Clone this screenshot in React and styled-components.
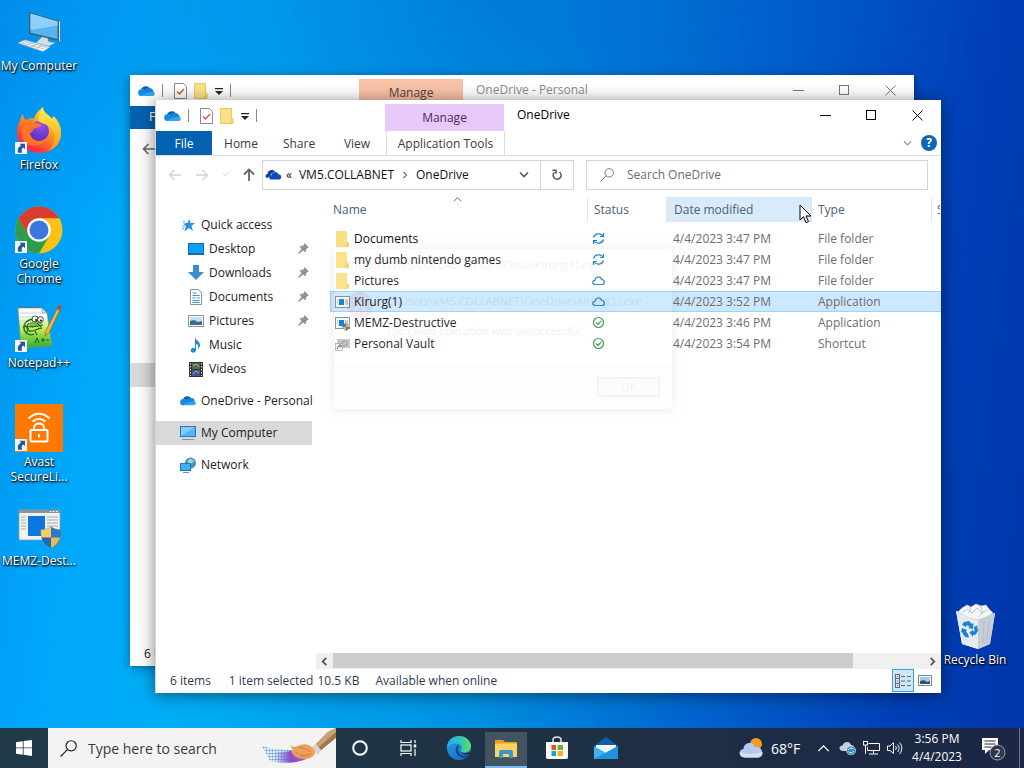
import React, { useState } from 'react';
import styled, { createGlobalStyle } from 'styled-components';

const GlobalStyle = createGlobalStyle`
  html, body, #root {
    height: 100%;
  }
  body {
    margin: 0;
    overflow: hidden;
    font-family: 'Open Sans', 'Noto Sans', sans-serif;
    font-size: 12px;
    color: #222;
  }
  * {
    box-sizing: border-box;
  }
  button, input {
    font: inherit;
    color: inherit;
    border: none;
    background: none;
    padding: 0;
    margin: 0;
  }
  a {
    color: inherit;
    text-decoration: none;
  }
  svg {
    display: block;
    flex: none;
  }
`;

const Screen = styled.div`
  height: 100%;
  min-height: 700px;
  display: flex;
  flex-direction: column;
`;

const Desktop = styled.main`
  flex: 1;
  position: relative;
  background:
    radial-gradient(ellipse 60% 40% at 50% 0%, rgba(0, 70, 190, 0.35), transparent),
    linear-gradient(97deg, #0093ee 0%, #00a8fa 12%, #00aef6 24%, #0092e2 50%, #0060cc 72%, #0040b8 88%, #0036a8 100%);
`;

const IconColumn = styled.div`
  display: flex;
  flex-direction: column;
  width: 78px;
`;

const Shortcut = styled.button`
  width: 78px;
  height: 99px;
  padding-top: 8px;
  display: flex;
  flex-direction: column;
  align-items: center;
  gap: 2px;
  color: #fff;
  line-height: 15px;
  text-shadow: 1px 1px 2px #000, 0 1px 2px rgba(0, 0, 0, 0.8);
`;

const BinSpot = styled.div`
  position: absolute;
  right: 10px;
  bottom: 35px;
`;

/* ---- windows ---- */

const BackWindow = styled.section`
  position: absolute;
  left: 130px;
  right: 110px;
  top: 75px;
  bottom: 62px;
  background: #fff;
  box-shadow: 0 2px 10px rgba(0, 0, 0, 0.4);
  display: flex;
  flex-direction: column;
`;

const FrontWindow = styled.section`
  position: absolute;
  left: 155px;
  right: 83px;
  top: 100px;
  bottom: 35px;
  background: #fff;
  border-left: 1px solid #d5d5d5;
  box-shadow: 0 2px 16px rgba(0, 0, 0, 0.5);
  display: flex;
  flex-direction: column;
`;

const TitleBar = styled.header`
  display: flex;
  height: 31px;
  flex: none;
  padding-right: 1px;
  color: ${(p) => (p.$dim ? '#8c8c8c' : '#000')};
`;

const QuickTools = styled.div`
  width: 229px;
  flex: none;
  padding-left: 8px;
  display: flex;
  align-items: center;
  gap: 7px;
`;

const Divider = styled.span`
  width: 1px;
  height: 13px;
  margin-right: 4px;
  background: #888;
`;

const ManageTab = styled.div`
  width: ${(p) => p.$width}px;
  flex: none;
  margin-top: 4px;
  display: flex;
  align-items: center;
  justify-content: center;
  background: ${(p) => p.$color};
  color: ${(p) => p.$text};
`;

const WindowTitle = styled.h1`
  flex: 1;
  margin: 0;
  padding-left: 13px;
  font-size: 12px;
  font-weight: 400;
  line-height: 30px;
`;

const WindowButton = styled.button`
  width: 46px;
  height: 30px;
  display: flex;
  align-items: center;
  justify-content: center;
`;

const Ribbon = styled.nav`
  display: flex;
  align-items: center;
  height: 25px;
  flex: none;
  border-bottom: 1px solid #dedede;
  color: #3b3b3b;
`;

const FileTab = styled.button`
  width: 56px;
  height: 24px;
  background: #0463b1;
  color: #fff;
`;

const RibbonTab = styled.button`
  width: 58px;
  height: 24px;
`;

const ToolsTab = styled.button`
  width: 119px;
  height: 24px;
  border-left: 1px solid #ddd;
  border-right: 1px solid #ddd;
`;

const RibbonEnd = styled.div`
  margin-left: auto;
  padding-right: 4px;
  display: flex;
  align-items: center;
  gap: 9px;
`;

const Help = styled.button`
  width: 16px;
  height: 16px;
  border-radius: 50%;
  background: #0b67b5;
  color: #fff;
  font-weight: 700;
  line-height: 16px;
`;

const NavRow = styled.div`
  display: flex;
  align-items: center;
  height: 39px;
  flex: none;
  padding: 0 13px 2px 0;
`;

const Arrows = styled.div`
  width: 106px;
  flex: none;
  display: flex;
  align-items: center;
  padding-left: 12px;
  gap: 13px;
`;

const AddressBox = styled.div`
  flex: 1 1 312px;
  height: 30px;
  display: flex;
  align-items: center;
  border: 1px solid #d4d4d4;
  color: #111;
`;

const Crumb = styled.a`
  padding: 0 7px;
`;

const RootCrumb = styled.a`
  padding: 0 4px 0 2px;
`;

const DropButton = styled.button`
  margin-left: auto;
  width: 32px;
  display: flex;
  justify-content: center;
`;

const RefreshButton = styled.button`
  width: 33px;
  height: 28px;
  border-left: 1px solid #d4d4d4;
  display: flex;
  align-items: center;
  justify-content: center;
`;

const SearchBox = styled.label`
  flex: 1 1 342px;
  height: 30px;
  margin-left: 12px;
  padding-left: 13px;
  display: flex;
  align-items: center;
  gap: 13px;
  border: 1px solid #d4d4d4;
`;

const TextInput = styled.input`
  flex: 1;
  min-width: 0;
  outline: none;
  &::placeholder {
    color: ${(p) => p.$hint};
    opacity: 1;
  }
`;

const Content = styled.div`
  flex: 1;
  min-height: 0;
  display: flex;
`;

const Sidebar = styled.nav`
  width: 160px;
  flex: none;
  padding: 18px 4px 0 0;
`;

const SideLink = styled.a`
  display: flex;
  align-items: center;
  gap: 5px;
  height: 24px;
  margin-bottom: ${(p) => (p.$gap ? 8 : 0)}px;
  padding-left: ${(p) => (p.$top ? 24 : 32)}px;
  padding-bottom: 1px;
  background: ${(p) => (p.$active ? '#d9d9d9' : 'none')};
  white-space: nowrap;
`;

const PinSlot = styled.span`
  margin-left: auto;
  margin-right: 3px;
`;

const FilePane = styled.div`
  flex: 1;
  min-width: 0;
  position: relative;
  display: flex;
  flex-direction: column;
`;

const TableWrap = styled.div`
  flex: 1;
  padding: 2px 0 0 14px;
  overflow: hidden;
`;

const Table = styled.table`
  width: 100%;
  table-layout: fixed;
  border-collapse: separate;
  border-spacing: 0;
`;

const HeadCell = styled.th`
  height: 25px;
  padding: 0 0 0 ${(p) => p.$pad}px;
  text-align: left;
  font-weight: 400;
  color: #4c607a;
  white-space: nowrap;
  overflow: hidden;
  border-right: 1px solid ${(p) => (p.$last ? 'transparent' : '#e5e5e5')};
  background: ${(p) => (p.$hot ? '#d9ebf9' : 'none')};
`;

const SortMark = styled.span`
  position: absolute;
  top: 0;
  left: 137px;
`;

const Spacer = styled.td`
  height: 6px;
  padding: 0;
`;

const Row = styled.tr`
  & > td {
    height: 21px;
    padding: 0 0 0 6px;
    white-space: nowrap;
    overflow: hidden;
    line-height: 19px;
    color: #6d6d6d;
    border-top: 1px solid ${(p) => (p.$on ? '#99d1ff' : 'transparent')};
    border-bottom: 1px solid ${(p) => (p.$on ? '#99d1ff' : 'transparent')};
    background: ${(p) => (p.$on ? '#cce8ff' : 'none')};
  }
  & > td:first-child {
    padding-left: 4px;
    color: #111;
    border-left: 1px solid ${(p) => (p.$on ? '#99d1ff' : 'transparent')};
  }
  & > td:nth-child(2) {
    padding-left: 4px;
  }
`;

const FileName = styled.span`
  display: flex;
  align-items: center;
  gap: 4px;
`;

const ScrollBar = styled.div`
  display: flex;
  height: 16px;
  flex: none;
  background: #f0f0f0;
`;

const ScrollButton = styled.button`
  width: 17px;
  display: flex;
  align-items: center;
  justify-content: center;
`;

const ScrollTrack = styled.div`
  flex: 1;
`;

const ScrollThumb = styled.div`
  width: 88%;
  height: 15px;
  background: #cdcdcd;
`;

const StatusBar = styled.footer`
  display: flex;
  align-items: center;
  height: 24px;
  flex: none;
  padding: 0 5px 1px 14px;
  color: #2b3a52;
`;

const StatusText = styled.span`
  margin-right: ${(p) => p.$gap}px;
`;

const ViewButtons = styled.div`
  margin-left: auto;
  display: flex;
`;

const ViewButton = styled.button`
  width: 22px;
  height: 23px;
  display: flex;
  align-items: center;
  justify-content: center;
  border: 1px solid ${(p) => (p.$on ? '#3ba0d8' : 'transparent')};
  background: ${(p) => (p.$on ? '#cce8f6' : 'none')};
`;

/* message box that is fading out over the file list */
const FadingDialog = styled.div`
  position: absolute;
  left: 18px;
  top: 54px;
  width: 338px;
  height: 160px;
  opacity: 0.07;
  pointer-events: none;
  display: flex;
  flex-direction: column;
  background: #fff;
  box-shadow: 0 1px 10px #000;
  font-size: 11px;
`;

const DialogTitle = styled.div`
  height: 30px;
  padding-left: 10px;
  line-height: 32px;
`;

const DialogBody = styled.div`
  flex: 1;
  padding: 12px 10px 0 12px;
  display: flex;
  gap: 12px;
  white-space: nowrap;
`;

const DialogText = styled.p`
  margin: 2px 0 0;
  line-height: 15px;
`;

const DialogFoot = styled.div`
  height: 44px;
  padding: 12px 12px 10px;
  display: flex;
  justify-content: flex-end;
  background: #eee;
`;

const DialogButton = styled.button`
  width: 63px;
  height: 20px;
  border: 2px solid #0078d7;
  background: #ddd;
  line-height: 16px;
`;

const CursorSpot = styled.div`
  position: absolute;
  left: 799px;
  top: 204px;
  pointer-events: none;
`;

const BackFile = styled.div`
  width: 60px;
  height: 23px;
  padding-left: 19px;
  background: #0463b1;
  color: #fff;
  line-height: 22px;
`;

const BackArrow = styled.div`
  padding: 13px 0 0 12px;
`;

const BackPane = styled.div`
  flex: 1;
  padding-top: 207px;
`;

const BackSelected = styled.div`
  width: 60px;
  height: 24px;
  background: #d9d9d9;
`;

const BackStatus = styled.footer`
  height: 24px;
  padding-left: 14px;
  line-height: 24px;
`;

/* ---- taskbar ---- */

const Taskbar = styled.footer`
  height: 40px;
  flex: none;
  display: flex;
  background: linear-gradient(90deg, #203a48, #1f3245 50%, #1b2745);
  color: #fff;
`;

const TaskButton = styled.button`
  width: ${(p) => p.$width || 48}px;
  flex: none;
  display: flex;
  align-items: center;
  justify-content: center;
`;

const ActiveTask = styled(TaskButton)`
  background: #435362;
  border-bottom: 2px solid #76b9ed;
  margin: 4px 2px 0 0;
`;

const TaskSearch = styled.label`
  width: 288px;
  flex: none;
  display: flex;
  align-items: center;
  padding-left: 12px;
  gap: 11px;
  background: #f3f3f3;
  color: #222;
  font-size: 14px;
`;

const Tray = styled.div`
  margin-left: auto;
  display: flex;
  align-items: stretch;
`;

const Weather = styled.button`
  width: 72px;
  display: flex;
  align-items: center;
  gap: 6px;
  font-size: 14px;
`;

const Clock = styled.button`
  width: 60px;
  line-height: 18px;
  text-align: center;
`;

const Notices = styled.button`
  width: 52px;
  display: flex;
  align-items: center;
  justify-content: center;
`;

const ShowDesktop = styled.button`
  width: 5px;
  border-left: 1px solid #6b7787;
`;

/* ---- drawings ---- */

const LinkArrow = () => (
  <g>
    <rect x="0" y="35" width="12" height="12" fill="#f6f6f6" />
    <path d="M4.500 36.800H10v5.500L8.300 40.600c-1.600 1-2 2.400-1.300 5.200H3.200C2 42.500 3 40.200 6 38.500z" fill="#1d5aa8" />
  </g>
);

const ComputerIcon = () => (
  <svg width="48" height="48" viewBox="0 0 48 48">
    <path d="M14 4l30 9v20l-30-7z" fill="#3d5d78" />
    <path d="M15.500 5.500l27 8v17.500l-27-6.200z" fill="#58b4ef" />
    <path d="M15.500 5.500l27 8v4L15.500 22z" fill="#8fd0f8" />
    <path d="M44 13l1 .5v19.800l-1-.3z" fill="#dfe8ee" />
    <path d="M27 29l6 1.500v3l7 1.500-6 3-13-3z" fill="#d5dfe8" stroke="#9cabb8" strokeWidth=".5" />
    <path d="M3 35l7-3 25 7-7 4.500z" fill="#f2f5f7" stroke="#a5b2bc" strokeWidth=".6" />
    <path d="M7 35l22 6M10 33.500l22 6.200M12 33l-6 2.800M17 34.500l-6 3M22 36l-6 3M27 37.500l-6 3" stroke="#aab5be" strokeWidth=".7" />
  </svg>
);

const FirefoxIcon = () => (
  <svg width="48" height="48" viewBox="0 0 48 48">
    <defs>
      <linearGradient id="ffBody" x1=".8" y1=".1" x2=".2" y2="1">
        <stop offset="0" stopColor="#ffe226" />
        <stop offset=".4" stopColor="#ff9a1e" />
        <stop offset=".75" stopColor="#ff4238" />
        <stop offset="1" stopColor="#f01a6b" />
      </linearGradient>
      <radialGradient id="ffGlobe" cx=".6" cy=".2" r=".9">
        <stop offset="0" stopColor="#a04cf0" />
        <stop offset="1" stopColor="#4a2fb8" />
      </radialGradient>
      <linearGradient id="ffTail" x1="0" y1="0" x2="0" y2="1">
        <stop offset="0" stopColor="#fff14a" />
        <stop offset="1" stopColor="#ff9622" />
      </linearGradient>
    </defs>
    <path d="M5 14c0-3 2-6 3-7 0 3 1 5 3 6 2-1 5-2 8-1 1-5 5-9 9-12 0 4 2 6 5 8 2 1 3 3 4 4 1-1 1-2 1-3 5 4 8 10 8 17 0 13-10 20-22 20S2 37 2 26c0-5 1-9 3-12z" fill="url(#ffBody)" />
    <circle cx="24" cy="24" r="10" fill="url(#ffGlobe)" />
    <path d="M28 0c0 4 2 6 5 8 2 1 3 3 4 4 1-1 1-2 1-3 5 4 8 10 8 17 0 9-6 16-13 18 7-6 9-15 4-22-4-5-10-5-14-8 0-5 2-10 5-14z" fill="url(#ffTail)" />
    <path d="M11 13c5-2 8 1 10 3 3 0 5 1 5 2-1 3-7 3-8 5 0 2-2 3-3 3 1 7 8 11 17 6-4 7-14 9-21 4-5-4-7-13 0-23z" fill="#ff7a22" opacity=".9" />
    <LinkArrow />
  </svg>
);

const ChromeIcon = () => (
  <svg width="48" height="48" viewBox="0 0 48 48">
    <circle cx="24" cy="24" r="23.500" fill="#fbc116" />
    <path d="M3.650 12.250A23.500 23.500 0 0 0 24 47.500L34.200 29.900 24 24 13.800 29.900z" fill="#2e9c4c" />
    <path d="M3.650 12.250A23.500 23.500 0 0 1 44.350 12.250H24L13.800 29.900z" fill="#d93c31" />
    <circle cx="24" cy="24" r="11.800" fill="#fff" />
    <circle cx="24" cy="24" r="9.500" fill="#3a78e0" />
    <LinkArrow />
  </svg>
);

const NotepadIcon = () => (
  <svg width="48" height="48" viewBox="0 0 48 48">
    <defs>
      <linearGradient id="nppPage" x1="0" y1="0" x2="0" y2="1">
        <stop offset=".2" stopColor="#fdfdfd" />
        <stop offset=".55" stopColor="#b5ec52" />
        <stop offset="1" stopColor="#2fa82f" />
      </linearGradient>
    </defs>
    <path d="M3 3h24l5 5 5 33-31 2z" fill="url(#nppPage)" stroke="#84918d" strokeWidth=".7" />
    <path d="M5 8h21M5 12h23M5 16h24" stroke="#a9cbd8" strokeWidth=".7" />
    <path d="M4 3v-2M7 3v-2M10 3v-2M13 3v-2M16 3v-2M19 3v-2M22 3v-2M25 3v-2" stroke="#5c6b70" strokeWidth="1" />
    <path d="M27 3v5h5z" fill="#dce8ec" stroke="#84918d" strokeWidth=".7" />
    <path d="M19 14c-6 0-11 4-10 10 1 5 7 7 10 5M14 18c-3 3-3 7 1 8s7-3 12-3M16 18h10M17 22l10-4M13 25l-2 4M20 26l2 4" fill="none" stroke="#2d6d28" strokeWidth="1.300" />
    <path d="M14 19c3-4 9-4 13-1-2 3-8 5-12 4z" fill="#74bc43" />
    <path d="M8 22c5-1 10 1 20-2M10 20l4 4M22 18l4 4" fill="none" stroke="#1d3d1b" strokeWidth=".9" />
    <circle cx="20" cy="14" r="3" fill="#fff" stroke="#222" strokeWidth=".8" />
    <circle cx="25.500" cy="14.500" r="2.800" fill="#fff" stroke="#222" strokeWidth=".8" />
    <circle cx="21" cy="15" r="1" fill="#111" />
    <circle cx="26" cy="15.500" r="1" fill="#111" />
    <path d="M20 38l2-5 2 5M26 35h4M28 33v4M31 35h3" fill="none" stroke="#164f1c" strokeWidth=".9" />
    <path d="M44 0l2.500 1.500L34 28l-4 3 .8-5z" fill="#f3b73a" stroke="#7c5b1b" strokeWidth=".6" />
    <path d="M44 0l2.500 1.500-2 4-2.500-1.500z" fill="#b04a4f" />
    <LinkArrow />
  </svg>
);

const AvastIcon = () => (
  <svg width="48" height="48" viewBox="0 0 48 48">
    <rect width="48" height="48" fill="#ff7800" />
    <g fill="none" stroke="#fff" strokeWidth="2">
      <path d="M13.500 14.500c6-6.500 15-6.500 21 0M17.500 17.500c4-3.500 9-3.500 13 0" />
      <rect x="15.500" y="26" width="17" height="11.500" rx="1" />
      <path d="M19 26v-2c0-6 10-6 10 0v2M24 30v3.500" />
    </g>
    <LinkArrow />
  </svg>
);

const MemzIcon = () => (
  <svg width="48" height="48" viewBox="0 0 48 48">
    <rect x="4" y="7" width="41" height="30" fill="#f1f1f1" stroke="#9a9a9a" strokeWidth=".7" />
    <rect x="4" y="7" width="41" height="3" fill="#8d9498" />
    <path d="M35 8.500h1.500M38 8.500h1.500M41 8.500h1.500" stroke="#fff" />
    <rect x="13" y="13" width="17" height="20" fill="#0a78e0" />
    <path d="M6 14h5M6 17h5M6 20h5M6 23h5M6 26h5M32 14h11M32 17h11M32 20h11M32 23h11" stroke="#a8a8a8" />
    <path d="M36 24c3 2 6 3 10 3 0 9-3 15-10 18-7-3-10-9-10-18 4 0 7-1 10-3z" fill="#eabd4a" stroke="#7590a8" />
    <path d="M36 24v10.500h-9.500c-.4-2.500-.5-5-.5-7.500 4 0 7-1 10-3z" fill="#f5cd62" />
    <path d="M36 24c3 2 6 3 10 3l-.5 7.500H36z" fill="#2e77c9" />
    <path d="M36 34.500V45c-5-2-8.300-5.500-9.500-10.500z" fill="#2465b2" />
  </svg>
);

const BinIcon = () => (
  <svg width="48" height="48" viewBox="0 0 48 48">
    <path d="M5 9l6 33 16 5 12-5 5-31-12 4-17-3z" fill="#dde2e7" />
    <path d="M5 9l22 6v32l-16-5z" fill="#e8ebee" />
    <path d="M27 15l17-4-5 31-12 5z" fill="#c6cdd4" />
    <path d="M7 10l4-4 5-3 4 2 5-3 5 2 5-1 3 4 4 4-7 4-9 3-10-3z" fill="#f5f7f9" stroke="#c7ced5" strokeWidth=".7" />
    <path d="M12 10l5-3 4 4 5-5 5 5 5-3M20 5l-2 6M29 4l3 6-4 5" fill="none" stroke="#b5bec7" strokeWidth=".9" />
    <g fill="#1b82d6">
      <path d="M13 20l5-1 3 3 1.500-1-.5 6-5-1 1.500-1-2-2-2 2-3.500-2.500z" />
      <path d="M23 25l3-1.500 1 5-2 4-3 .5v2l-3.500-4.500 3.500-3v2l1.500-.5z" />
      <path d="M11 26l5 2-1 1.500L17 32l1 3.500-4-.5-3-5-1 .5z" />
    </g>
    <path d="M38 18l-2 20M33 19l-1 22" stroke="#b0b9c1" strokeWidth=".8" />
  </svg>
);

const CloudIcon = ({ size = 17 }) => (
  <svg width={size} height={size * 0.65} viewBox="0 0 17 11">
    <path d="M3 5a5 5 0 0 1 9-1.500L14 9H2z" fill="#0a5fb4" />
    <path d="M12 3.300A3.500 3.500 0 0 1 15.500 7l-5 2L7 4.500c1.500-1.500 3-1.700 5-1.200z" fill="#1a83d6" />
    <path d="M3.500 4.300A3.300 3.300 0 0 0 3.500 11l6-3-2-2.700a4 4 0 0 0-4-1z" fill="#178ae0" />
    <path d="M3.500 11h11a2.400 2.400 0 0 0 1-4.500L9 7.600z" fill="#2ba6f2" />
  </svg>
);

const OldCloudIcon = () => (
  <svg width="17" height="11" viewBox="0 0 17 11">
    <path d="M2 9C0 8 0 5.500 2.500 5c0-4 6-5.500 7.500-2 0 0-4 0-4.500 4z" fill="#0b3fa3" />
    <path d="M6 10.500c-2.500-.5-2.500-4 .5-4.200C7 2.500 12.500 2 13.300 5.300 17 5.500 17 10 14.500 10.500z" fill="#0e4bb5" />
  </svg>
);

const CheckPage = () => (
  <svg width="13" height="16" viewBox="0 0 13 16">
    <path d="M.5.5h9l3 3v12H.5z" fill="#fff" stroke="#888" />
    <path d="M3 8.500l2.500 2.500L10 6" fill="none" stroke="#d2503c" strokeWidth="1.400" />
  </svg>
);

const Folder = () => (
  <svg width="14" height="16" viewBox="0 0 14 16">
    <path d="M.5.5h11v10h1.500v5H.5z" fill="#fbe288" stroke="#eccb60" />
    <path d="M10 15v-4.500h3.500V15z" fill="#f3d36c" />
  </svg>
);

const FileBig = () => (
  <svg width="15" height="16" viewBox="0 0 15 16">
    <path d="M1 0h11v11h1.500v5H1z" fill="#fbe083" />
    <path d="M11.500 15.500V11h2v4.500z" fill="#f0cc60" />
  </svg>
);

const AppIcon = ({ shield }) => (
  <svg width="15" height="16" viewBox="0 0 15 16">
    <rect x=".5" y="2.500" width="14" height="11" fill="#f5f7f8" stroke="#7f8a91" />
    <rect x="4" y="5" width="5" height="6" fill="#0a78d0" />
    <path d="M10 6h3M10 8h3M10 10h3M2 6h1M2 8h1" stroke="#8d9ba5" />
    {shield && (
      <g>
        <path d="M11 8c1 1 2.500 1 4 1 0 3-1 5-4 7-3-2-4-4-4-7 1.500 0 3 0 4-1z" fill="#2c6fc0" />
        <path d="M11 8c1 1 2.500 1 4 1v3h-4zM11 12v4c-2-1-3-2.500-3.500-4z" fill="#e8b33a" />
      </g>
    )}
  </svg>
);

const VaultIcon = () => (
  <svg width="15" height="16" viewBox="0 0 15 16">
    <rect x="2" y="3" width="13" height="9" fill="#c3c3c3" />
    <circle cx="9.500" cy="7.500" r="2.500" fill="none" stroke="#909090" />
    <rect x=".5" y="7.500" width="7" height="7" fill="#fff" stroke="#999" strokeWidth=".7" />
    <path d="M2.500 13c0-2.500 1-3 3-3M4 9h2v2.500" fill="none" stroke="#444" />
  </svg>
);

const SyncMark = () => (
  <svg width="13" height="13" viewBox="0 0 13 13" fill="none" stroke="#2080c4" strokeWidth="1.200">
    <path d="M1.500 5.500c1-4 7-5 9.500-1.500M11.500 1v3.500H8M11.500 7.500c-1 4-7 5-9.500 1.500M1.500 12V8.500H5" />
  </svg>
);

const CloudMark = () => (
  <svg width="13" height="13" viewBox="0 0 13 13" fill="none" stroke="#2080c4" strokeWidth="1.200">
    <path d="M3.500 10.500C0 10.500 0 6.500 3 6.300 3.500 2 9 2 9.500 5.500c4 0 3.500 5 .5 5z" />
  </svg>
);

const DoneMark = () => (
  <svg width="13" height="13" viewBox="0 0 13 13" fill="none" stroke="#3a9446" strokeWidth="1.200">
    <circle cx="6.500" cy="6.500" r="5" />
    <path d="M4 6.500l2 2 3.200-3.700" />
  </svg>
);

const MARKS = { sync: SyncMark, cloud: CloudMark, done: DoneMark };

const SideIcon = ({ kind }) => (
  <svg width="16" height="16" viewBox="0 0 16 16">
    {kind === 'star' && (
      <g>
        <path d="M9 2l1.500 4H15l-3.500 3 1.500 5-4-3-4.500 3.500L6 9 3 6.500 7.500 6z" fill="#2395df" />
        <path d="M3 4.500h2M2 9h3M2 11.500h2" stroke="#53aee6" />
      </g>
    )}
    {kind === 'desktop' && (
      <g>
        <rect y="2" width="16" height="12" fill="#0f6db8" />
        <rect x="1" y="3" width="14" height="9" fill="#0ba0f3" />
      </g>
    )}
    {kind === 'down' && <path d="M5 0h6v7h5l-8 8-8-8h5z" fill="#3a8ccc" />}
    {kind === 'doc' && (
      <g>
        <path d="M2.500.5h8l3 3v12h-11z" fill="#fff" stroke="#8a9399" />
        <path d="M4.500 4h4M4.500 6.500h7M4.500 9h3M9 9h3M4.500 11.500h7M4.500 13.500h7" stroke="#3c8fd0" />
      </g>
    )}
    {kind === 'pic' && (
      <g>
        <rect x=".5" y="2.500" width="15" height="11" fill="#fff" stroke="#8a9399" />
        <rect x="2" y="4" width="12" height="8" fill="#bfe0f5" />
        <path d="M2 12V8l4-1 4 2 4-1v4z" fill="#3a6d86" />
      </g>
    )}
    {kind === 'music' && <path d="M7 0c1 4 5 4 5 8 0 2-1 3-2 4 1-4-1-5-2-5v6c0 2-2 3-3.500 2.500-2.500-.5-2.500-4 .5-4.500.7-.2 1.300 0 2 .2z" fill="#1c8ad6" />}
    {kind === 'video' && (
      <g>
        <rect x="1" y="1" width="14" height="15" fill="#333" />
        <path d="M2.500 2v13M13.500 2v13" stroke="#ddd" strokeDasharray="1.500 1.500" />
        <rect x="4" y="2" width="8" height="6" fill="#54655a" />
        <rect x="4" y="9" width="8" height="6" fill="#4157a3" />
        <path d="M5 5l3-2 3 3M5 13l3-3 3 2" stroke="#b0c44a" fill="none" />
      </g>
    )}
    {kind === 'pc' && (
      <g>
        <rect y="1" width="16" height="11" fill="#2476b4" />
        <rect x="1" y="2" width="14" height="9" fill="#4fb5f5" />
        <path d="M1 11l14-9H1z" fill="#84cdf9" />
        <path d="M2 14.500h12" stroke="#7d97a8" />
      </g>
    )}
    {kind === 'net' && (
      <g>
        <circle cx="10.500" cy="6" r="5.500" fill="#4a96b8" />
        <path d="M8 3c2-2 5-1 6 1l-3 3-3-1z" fill="#9fd1d8" />
        <rect y="6" width="11" height="8" fill="#1878bd" />
        <rect x="1" y="7" width="9" height="6" fill="#41b0f3" />
        <path d="M3 15.500h6" stroke="#6d8ea5" />
      </g>
    )}
  </svg>
);

const Pin = () => (
  <svg width="11" height="11" viewBox="0 0 11 11" fill="#8b9298">
    <path d="M6.500 0L11 4.500 9.500 5 8 6.500 7.500 9.500 5 7.500 1 11 0 10.500 3.500 6 1.500 3.500 4.500 3 6 1.500z" />
  </svg>
);

const Chevron = ({ dir = 'down', size = 9, color = '#555', width = 1.3 }) => {
  const paths = {
    down: 'M1 2.500l4 4 4-4',
    up: 'M1 7l4-4 4 4',
    left: 'M7 1L3 5l4 4',
    right: 'M3 1l4 4-4 4',
  };
  return (
    <svg width={size} height={size} viewBox="0 0 10 10" fill="none" stroke={color} strokeWidth={width}>
      <path d={paths[dir]} />
    </svg>
  );
};

const Arrow = ({ turn = 0, color = '#d3d3d3', width = 1.3 }) => (
  <svg width="14" height="14" viewBox="0 0 14 14" fill="none" stroke={color} strokeWidth={width}>
    <path d="M13 7H1.500M6.500 2L1.500 7l5 5" transform={`rotate(${turn} 7 7)`} />
  </svg>
);

const CustomizeIcon = () => (
  <svg width="8" height="8" viewBox="0 0 8 8" fill="#222">
    <path d="M0 1h8v1.200H0zM0 4h8L4 8z" />
  </svg>
);

const Magnifier = ({ size, color }) => (
  <svg width={size} height={size} viewBox="0 0 16 16" fill="none" stroke={color} strokeWidth="1.100">
    <circle cx="10.500" cy="5.500" r="4.800" />
    <path d="M7 9l-6.500 6.500" />
  </svg>
);

const RefreshIcon = () => (
  <svg width="12" height="12" viewBox="0 0 12 12" fill="none" stroke="#555" strokeWidth="1.500">
    <path d="M8.500 3A4 4 0 1 1 3.500 3.200M1.500 1.200H5v3.600" />
  </svg>
);

const Caption = ({ color }) => (
  <>
    <WindowButton aria-label="Minimize">
      <svg width="11" height="11" stroke={color}><path d="M0 5.500h11" /></svg>
    </WindowButton>
    <WindowButton aria-label="Maximize">
      <svg width="11" height="11" stroke={color} fill="none"><rect x=".5" y=".5" width="9" height="9" /></svg>
    </WindowButton>
    <WindowButton aria-label="Close">
      <svg width="11" height="11" stroke={color}><path d="M.5.5l10 10M10.500.5l-10 10" /></svg>
    </WindowButton>
  </>
);

const QuickBar = () => (
  <QuickTools>
    <CloudIcon />
    <Divider />
    <CheckPage />
    <Folder />
    <CustomizeIcon />
    <Divider />
  </QuickTools>
);

const BrushArt = () => (
  <svg width="74" height="40" viewBox="0 0 74 40">
    <defs>
      <pattern id="dots" width="3" height="3" patternUnits="userSpaceOnUse">
        <circle cx="1.500" cy="1.500" r="1.100" fill="#4a9fdc" />
      </pattern>
      <linearGradient id="paint" x1="0" x2="1">
        <stop offset="0" stopColor="#6a60cf" stopOpacity="0" />
        <stop offset=".45" stopColor="#8a4cc8" />
        <stop offset="1" stopColor="#b95ab8" />
      </linearGradient>
    </defs>
    <path d="M0 18c8 3 18 3 30 4l4 10c-8 3-20 3-26 1z" fill="url(#dots)" />
    <path d="M12 24c8 0 16 0 22-3l14 8c-8 5-20 7-36 5z" fill="url(#paint)" />
    <path d="M52 18L66 4l8-4v10L58 23z" fill="#a2754a" />
    <path d="M66 4l8-4v4L57 19l-3-2z" fill="#c9a274" />
    <path d="M49 20l5-4 5 6-3 5z" fill="#d9d4cf" />
    <path d="M28 17c4 3 6 2 10 0 6-2 12 0 15 6 1 4-4 8-10 8-7 0-12-3-14-8l2-1z" fill="#eba05c" />
    <path d="M33 24c6 4 11 4 17 1M36 19c5 1 9 2 13 5M38 28c4 1 7 0 10-2" stroke="#cf7d3c" fill="none" strokeWidth=".8" />
  </svg>
);

const EdgeIcon = () => (
  <svg width="24" height="24" viewBox="0 0 24 24">
    <defs>
      <linearGradient id="edgeTop" x1="0" x2="1">
        <stop offset="0" stopColor="#2aa8ee" />
        <stop offset=".6" stopColor="#35c8b0" />
        <stop offset="1" stopColor="#63dc5c" />
      </linearGradient>
      <linearGradient id="edgeLow" x1="0" y1="0" x2="1" y2="1">
        <stop offset="0" stopColor="#2ba0ea" />
        <stop offset="1" stopColor="#1264bb" />
      </linearGradient>
    </defs>
    <circle cx="12" cy="12" r="12" fill="url(#edgeLow)" />
    <path d="M0 12C0 4 6 0 12 0c7 0 12 5 12 10 0 4-3 6.500-6.500 6.500-3 0-4.500-1-3.500-2.500 2-3 0-6.500-4.500-6.500C4 7.500 1 9.500 0 12z" fill="url(#edgeTop)" />
    <path d="M10 10c-3 4-1 11 6 12 3 0 5-1.500 6-3-5 2-10.500 0-11-5 0-1.500 0-2.500 1-3.500C11.500 9.500 10.500 9.500 10 10z" fill="#124a92" />
    <path d="M14 16c2 1.500 6 1.500 9.500-.5l-1 2.500c-4 1.500-7.500 0-9-2z" fill="#1f3245" />
  </svg>
);

const WeatherIcon = () => (
  <svg width="26" height="22" viewBox="0 0 26 22">
    <circle cx="17" cy="7" r="6" fill="#f59a23" />
    <path d="M6 20.500c-7 0-7-8-1.500-8.500C5 5 14 4 16 10c9-1 9 10 3 10.500z" fill="#b4caf0" />
    <path d="M6 20.500c-4 0-5.500-3-4.500-5.500 5 3 16 2 22 0 .5 3-1.500 5.500-4.500 5.500z" fill="#d4e0f6" />
  </svg>
);

const places = [
  { label: 'Quick access', kind: 'star', top: true },
  { label: 'Desktop', kind: 'desktop', pin: true },
  { label: 'Downloads', kind: 'down', pin: true },
  { label: 'Documents', kind: 'doc', pin: true },
  { label: 'Pictures', kind: 'pic', pin: true },
  { label: 'Music', kind: 'music' },
  { label: 'Videos', kind: 'video', gap: true },
  { label: 'OneDrive - Personal', kind: 'cloud', top: true, gap: true },
  { label: 'My Computer', kind: 'pc', top: true, gap: true },
  { label: 'Network', kind: 'net', top: true },
];

const files = [
  { name: 'Documents', status: 'sync', date: '4/4/2023 3:47 PM', type: 'File folder', icon: <FileBig /> },
  { name: 'my dumb nintendo games', status: 'sync', date: '4/4/2023 3:47 PM', type: 'File folder', icon: <FileBig /> },
  { name: 'Pictures', status: 'cloud', date: '4/4/2023 3:47 PM', type: 'File folder', icon: <FileBig /> },
  { name: 'Kirurg(1)', status: 'cloud', date: '4/4/2023 3:52 PM', type: 'Application', icon: <AppIcon /> },
  { name: 'MEMZ-Destructive', status: 'done', date: '4/4/2023 3:46 PM', type: 'Application', icon: <AppIcon shield /> },
  { name: 'Personal Vault', status: 'done', date: '4/4/2023 3:54 PM', type: 'Shortcut', icon: <VaultIcon /> },
];

const shortcuts = [
  { label: 'My Computer', icon: <ComputerIcon /> },
  { label: 'Firefox', icon: <FirefoxIcon /> },
  { label: 'Google Chrome', icon: <ChromeIcon /> },
  { label: 'Notepad++', icon: <NotepadIcon /> },
  { label: 'Avast SecureLi...', icon: <AvastIcon /> },
  { label: 'MEMZ-Dest...', icon: <MemzIcon /> },
];

const FileList = () => {
  const [selected, setSelected] = useState('Kirurg(1)');

  return (
    <TableWrap>
      <Table>
        <colgroup>
          <col width="258" />
          <col width="79" />
          <col width="145" />
          <col width="120" />
          <col />
        </colgroup>
        <thead>
          <tr>
            <HeadCell $pad={3}>Name</HeadCell>
            <HeadCell $pad={6}>Status</HeadCell>
            <HeadCell $pad={7} $hot>Date modified</HeadCell>
            <HeadCell $pad={6}>Type</HeadCell>
            <HeadCell $pad={5} $last>S</HeadCell>
          </tr>
        </thead>
        <tbody>
          <tr><Spacer colSpan={5} /></tr>
          {files.map((file) => {
            const Mark = MARKS[file.status];
            return (
              <Row key={file.name} $on={file.name === selected} onClick={() => setSelected(file.name)}>
                <td>
                  <FileName>
                    {file.icon}
                    {file.name}
                  </FileName>
                </td>
                <td><Mark /></td>
                <td>{file.date}</td>
                <td>{file.type}</td>
                <td />
              </Row>
            );
          })}
        </tbody>
      </Table>
    </TableWrap>
  );
};

const Explorer = () => (
  <FrontWindow>
    <TitleBar>
      <QuickBar />
      <ManageTab $width={119} $color="#e6c9f8" $text="#4a2a66">Manage</ManageTab>
      <WindowTitle>OneDrive</WindowTitle>
      <Caption color="#000" />
    </TitleBar>
    <Ribbon>
      <FileTab>File</FileTab>
      <RibbonTab>Home</RibbonTab>
      <RibbonTab>Share</RibbonTab>
      <RibbonTab>View</RibbonTab>
      <ToolsTab>Application Tools</ToolsTab>
      <RibbonEnd>
        <Chevron color="#999" />
        <Help>?</Help>
      </RibbonEnd>
    </Ribbon>
    <NavRow>
      <Arrows>
        <Arrow />
        <Arrow turn={180} />
        <Chevron size={7} color="#ccc" />
        <Arrow turn={90} color="#666" width={1.8} />
      </Arrows>
      <AddressBox>
        <RootCrumb href="#root" aria-label="OneDrive root"><OldCloudIcon /></RootCrumb>
        «
        <Crumb href="#vm">VM5.COLLABNET</Crumb>
        <Chevron dir="right" size={8} />
        <Crumb href="#onedrive">OneDrive</Crumb>
        <DropButton aria-label="Previous locations"><Chevron size={10} width={1.6} /></DropButton>
        <RefreshButton aria-label="Refresh"><RefreshIcon /></RefreshButton>
      </AddressBox>
      <SearchBox>
        <Magnifier size={14} color="#777" />
        <TextInput $hint="#6d6d6d" placeholder="Search OneDrive" aria-label="Search OneDrive" />
      </SearchBox>
    </NavRow>
    <Content>
      <Sidebar>
        {places.map((p) => (
          <SideLink key={p.label} href="#place" $top={p.top} $gap={p.gap} $active={p.kind === 'pc'}>
            {p.kind === 'cloud' ? <CloudIcon size={16} /> : <SideIcon kind={p.kind} />}
            {p.label}
            {p.pin && <PinSlot><Pin /></PinSlot>}
          </SideLink>
        ))}
      </Sidebar>
      <FilePane>
        <SortMark><Chevron dir="up" width={1} /></SortMark>
        <FileList />
        <FadingDialog>
          <DialogTitle>C:\Users\VM5.COLLABNET\OneDrive\Kirurg(1).exe</DialogTitle>
          <DialogBody>
            <svg width="28" height="28" viewBox="0 0 28 28">
              <circle cx="14" cy="14" r="13" fill="#e01b24" />
              <path d="M8 8l12 12M20 8L8 20" stroke="#fff" strokeWidth="2" />
            </svg>
            <DialogText>
              C:\Users\VM5.COLLABNET\OneDrive\Kirurg(1).exe
              <br />
              <br />
              The cloud operation was unsuccessful.
            </DialogText>
          </DialogBody>
          <DialogFoot><DialogButton>OK</DialogButton></DialogFoot>
        </FadingDialog>
        <ScrollBar>
          <ScrollButton aria-label="Scroll left"><Chevron dir="left" width={2} /></ScrollButton>
          <ScrollTrack><ScrollThumb /></ScrollTrack>
          <ScrollButton aria-label="Scroll right"><Chevron dir="right" width={2} /></ScrollButton>
        </ScrollBar>
      </FilePane>
    </Content>
    <StatusBar>
      <StatusText $gap={18}>6 items</StatusText>
      <StatusText $gap={4}>1 item selected</StatusText>
      <StatusText $gap={16}>10.5 KB</StatusText>
      <StatusText $gap={0}>Available when online</StatusText>
      <ViewButtons>
        <ViewButton $on aria-label="Details view">
          <svg width="16" height="14" viewBox="0 0 16 14" fill="none" stroke="#667">
            <rect x=".5" y=".5" width="4" height="13" />
            <path d="M.5 4.500h4M.5 9.500h4M2 2.500h1M2 7h1M2 11.500h1M6 2.500h4M12 2.500h4M6 7h4M12 7h4M6 11.500h4M12 11.500h4" />
          </svg>
        </ViewButton>
        <ViewButton aria-label="Large icons view">
          <svg width="14" height="11" viewBox="0 0 14 11">
            <rect x=".5" y=".5" width="13" height="10" fill="#fff" stroke="#7b8794" />
            <rect x="2" y="2" width="10" height="7" fill="#9fcdf0" />
            <path d="M2 9V6l4-1 3 2 3-1v3z" fill="#2c5378" />
          </svg>
        </ViewButton>
      </ViewButtons>
    </StatusBar>
  </FrontWindow>
);

const App = () => {
  return (
    <Screen>
      <GlobalStyle />
      <Desktop>
        <IconColumn>
          {shortcuts.map((s) => (
            <Shortcut key={s.label}>
              {s.icon}
              {s.label}
            </Shortcut>
          ))}
        </IconColumn>
        <BinSpot>
          <Shortcut>
            <BinIcon />
            Recycle Bin
          </Shortcut>
        </BinSpot>
        <BackWindow>
          <TitleBar $dim>
            <QuickBar />
            <ManageTab $width={104} $color="#f8c3a8" $text="#5a4034">Manage</ManageTab>
            <WindowTitle>OneDrive - Personal</WindowTitle>
            <Caption color="#777" />
          </TitleBar>
          <BackFile>File</BackFile>
          <BackArrow><Arrow color="#666" width={1.6} /></BackArrow>
          <BackPane><BackSelected /></BackPane>
          <BackStatus>6 items</BackStatus>
        </BackWindow>
        <Explorer />
        <CursorSpot>
          <svg width="14" height="20" viewBox="0 0 14 20">
            <path d="M1 1v15l3.500-3.300 2.500 6 2.500-1.100L7 12h5z" fill="#fff" stroke="#000" />
          </svg>
        </CursorSpot>
      </Desktop>
      <Taskbar>
        <TaskButton aria-label="Start">
          <svg width="16" height="16" viewBox="0 0 16 16" fill="#fff">
            <path d="M0 2.200L6.800 1.200V7.500H0zM7.600 1.100L16 0v7.500H7.600zM0 8.300h6.800v6.400L0 13.700zM7.600 8.300H16V16l-8.400-1.200z" />
          </svg>
        </TaskButton>
        <TaskSearch>
          <Magnifier size={17} color="#222" />
          <TextInput $hint="#3a3a3a" placeholder="Type here to search" aria-label="Type here to search" />
          <BrushArt />
        </TaskSearch>
        <TaskButton aria-label="Cortana">
          <svg width="16" height="16" fill="none" stroke="#fff" strokeWidth="2"><circle cx="8" cy="8" r="6.800" /></svg>
        </TaskButton>
        <TaskButton aria-label="Task view">
          <svg width="17" height="16" viewBox="0 0 17 16" fill="none" stroke="#fff" strokeWidth="1.200">
            <path d="M1 0v2.500h10V0M1 16v-2.500h10V16M15 0v3M15 9v7" />
            <rect x="1" y="5" width="10" height="6" />
            <path d="M15 4.500v3" strokeWidth="2.500" />
          </svg>
        </TaskButton>
        <TaskButton $width={53} aria-label="Edge"><EdgeIcon /></TaskButton>
        <ActiveTask $width={42} aria-label="File Explorer">
          <svg width="22" height="18" viewBox="0 0 22 18">
            <path d="M0 0h8l2 2h12v6H0z" fill="#e3a21d" />
            <path d="M0 3.500h22V17H0z" fill="#fcd362" />
            <path d="M4 18v-6c0-1 .5-2 2-2h10c1.500 0 2 1 2 2v6h-4v-4H8v4z" fill="#3f94cc" />
          </svg>
        </ActiveTask>
        <TaskButton $width={55} aria-label="Microsoft Store">
          <svg width="24" height="24" viewBox="0 0 24 24">
            <path d="M8 7V4c0-4 8-4 8 0v3" fill="none" stroke="#e4e4e4" strokeWidth="1.500" />
            <path d="M1 6h22v15c0 1-.5 2-2 2H3c-1.500 0-2-1-2-2z" fill="#fafafa" />
            <path d="M6.500 9H11v5H6.500z" fill="#e64b2c" />
            <path d="M12.500 9H18v5h-5.500z" fill="#72b32c" />
            <path d="M6.500 15H11v5H6.500z" fill="#219ddc" />
            <path d="M12.500 15H18v5h-5.500z" fill="#f5b51a" />
          </svg>
        </TaskButton>
        <TaskButton $width={44} aria-label="Mail">
          <svg width="24" height="22" viewBox="0 0 24 22">
            <path d="M0 9L12 0l12 9v4H0z" fill="#0f5ea6" />
            <path d="M2 8h20v8H2z" fill="#f3f7fb" />
            <path d="M0 9l12 7 12-7v13H0z" fill="#3cb4f0" />
            <path d="M24 9v13H0z" fill="#1f93df" />
          </svg>
        </TaskButton>
        <Tray>
          <Weather>
            <WeatherIcon />
            68°F
          </Weather>
          <TaskButton $width={24} aria-label="Hidden icons"><Chevron dir="up" size={13} color="#fff" width={1} /></TaskButton>
          <TaskButton $width={24} aria-label="OneDrive syncing">
            <svg width="17" height="14" viewBox="0 0 17 14">
              <path d="M3.500 10C-1 9.500 0 4.500 3.500 4.500 5 0 11 0 12 4c4 0 4 5 2 6z" fill="#c9cfd4" />
              <circle cx="12" cy="9.500" r="4.500" fill="#2c86b8" stroke="#e8eef2" strokeWidth=".7" />
              <path d="M9.500 9c.5-2 4-2.500 5-.5M14.500 10c-.5 2-4 2.500-5 .5" fill="none" stroke="#fff" />
            </svg>
          </TaskButton>
          <TaskButton $width={24} aria-label="Network">
            <svg width="17" height="14" viewBox="0 0 17 14" fill="none" stroke="#fff">
              <path d="M5.500 2.500h11v7H4.500V6M10.500 9.500v3M6 13h9" />
              <rect x=".5" y=".5" width="4" height="3.500" />
              <path d="M2.500 4v9" />
            </svg>
          </TaskButton>
          <TaskButton $width={24} aria-label="Volume">
            <svg width="16" height="14" viewBox="0 0 16 14" fill="none" stroke="#fff">
              <path d="M.5 5v4.500H3l3.500 3v-11L3 5z" />
              <path d="M8.500 5c1 1 1 3 0 4M10.500 3.500c2 2 2 5.500 0 7.500M12.500 1.500c3 3 3 8 0 11.500" />
            </svg>
          </TaskButton>
          <Clock>
            3:56 PM
            <br />
            4/4/2023
          </Clock>
          <Notices aria-label="2 notifications">
            <svg width="26" height="26" viewBox="0 0 26 26">
              <path d="M2 3h16v12H9l-4 4v-4H2z" fill="#fff" />
              <path d="M4.500 6h11M4.500 9h11M4.500 12h7" stroke="#1c2b45" />
              <circle cx="17.500" cy="17.500" r="7.500" fill="#2e3848" stroke="#9aa3ad" />
              <text x="17.500" y="21.500" fontSize="11" fill="#fff" textAnchor="middle">2</text>
            </svg>
          </Notices>
          <ShowDesktop aria-label="Show desktop" />
        </Tray>
      </Taskbar>
    </Screen>
  );
};

export default App;
